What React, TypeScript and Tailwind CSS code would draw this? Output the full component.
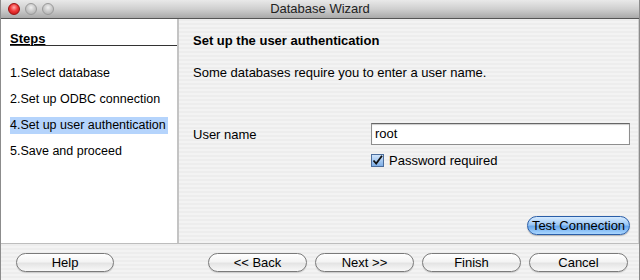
import React from "react";

const stripes =
  "bg-[repeating-linear-gradient(180deg,#ededed_0px,#ededed_2px,#f3f3f3_2px,#f3f3f3_4px)]";

function AquaButton({ label, width, blue }: { label: string; width: string; blue?: boolean }) {
  return (
    <div
      className={`${width} h-[19px] flex items-center justify-center rounded-full border text-[13px] leading-none whitespace-nowrap ${
        blue
          ? "border-[#2a5ea8] bg-[linear-gradient(180deg,#d6eaff_0%,#9cc8f5_45%,#6aa8ec_55%,#a9d6ff_100%)] text-black shadow-[0_1px_1px_rgba(0,0,0,0.25)]"
          : "border-[#7a7a7a] bg-[linear-gradient(180deg,#ffffff_0%,#f4f4f4_45%,#e4e4e4_55%,#f8f8f8_100%)] text-black shadow-[0_1px_1px_rgba(0,0,0,0.15)]"
      }`}
    >
      {label}
    </div>
  );
}

function Light({ red }: { red?: boolean }) {
  return (
    <div
      className={`w-[12px] h-[12px] rounded-full border ${
        red
          ? "border-[#9a1010] bg-[radial-gradient(circle_at_50%_35%,#ffb0b0_0%,#f03838_45%,#b80e0e_100%)]"
          : "border-[#9a9a9a] bg-[radial-gradient(circle_at_50%_35%,#f0f0f0_0%,#c8c8c8_50%,#a8a8a8_100%)]"
      }`}
    />
  );
}

export default function App() {
  const steps = [
    "1.Select database",
    "2.Set up ODBC connection",
    "4.Set up user authentication",
    "5.Save and proceed",
  ];

  return (
    <div
      className="w-[640px] h-[280px] flex flex-col overflow-hidden bg-[#ececec] border-x border-[#8c8c8c] text-[13px] text-black"
      style={{ fontFamily: '"Liberation Sans", Arial, sans-serif' }}
    >
      {/* Title bar */}
      <div className="relative h-[19px] shrink-0 flex items-center justify-center bg-[linear-gradient(180deg,#e9e9e9_0%,#cfcfcf_50%,#a9a9a9_100%)] border-b border-[#555]">
        <div className="absolute left-[7px] top-[3px] flex gap-[5px]">
          <Light red />
          <Light />
          <Light />
        </div>
        <span className="text-[13px] text-[#222]">Database Wizard</span>
      </div>

      {/* Body */}
      <div className="flex-1 flex min-h-0">
        {/* Steps panel */}
        <div className="w-[178px] shrink-0 bg-white border-r-2 border-[#c4c4c4] pl-[9px] pt-[13px] whitespace-nowrap">
          <div className="border-b border-[#333] font-bold underline h-[14px] leading-[13px] mb-[19px]">
            Steps
          </div>
          <div className="flex flex-col gap-[9px] pr-[9px] text-[12.5px]">
            {steps.map((s, i) => (
              <div
                key={s}
                className={`h-[17px] flex items-center ${i === 2 ? "bg-[#b5d4fc]" : ""}`}
              >
                {s}
              </div>
            ))}
          </div>
        </div>

        {/* Content panel */}
        <div className={`flex-1 flex flex-col ${stripes} pl-[14px] pr-[8px] pt-[14px] border-r border-[#d0d0d0] whitespace-nowrap`}>
          <div className="font-bold leading-[16px]">Set up the user authentication</div>
          <div className="mt-[16px] leading-[16px]">Some databases require you to enter a user name.</div>
          <div className="mt-[42px] flex items-center">
            <div className="w-[178px] pt-[2px]">User name</div>
            <div className="flex-1 h-[22px] bg-white border border-[#8e8e8e] border-t-[#666] flex items-center pl-[3px] shadow-[inset_0_1px_1px_rgba(0,0,0,0.2)]">
              root
            </div>
          </div>
          <div className="mt-[6px] flex items-center pl-[178px] gap-[5px]">
            <div className="w-[13px] h-[13px] border border-[#4b6d9c] bg-[linear-gradient(180deg,#cfe4fb,#7eaee6)] flex items-center justify-center">
              <svg width="11" height="11" viewBox="0 0 11 11">
                <path d="M1.5 5.5 L4.2 8.5 L10 0.8" fill="none" stroke="#111" strokeWidth="1.8" />
              </svg>
            </div>
            <span>Password required</span>
          </div>
          <div className="flex-1" />
          <div className="flex justify-end mb-[8px]">
            <AquaButton label="Test Connection" width="w-[103px]" blue />
          </div>
        </div>
      </div>

      {/* Footer */}
      <div className={`h-[37px] shrink-0 border-t border-[#bdbdbd] ${stripes} flex items-center pl-[15px] pr-[11px]`}>
        <AquaButton label="Help" width="w-[98px]" />
        <div className="flex-1" />
        <div className="flex gap-[8px]">
          <AquaButton label="<< Back" width="w-[99px]" />
          <AquaButton label="Next >>" width="w-[99px]" />
          <AquaButton label="Finish" width="w-[99px]" />
          <AquaButton label="Cancel" width="w-[99px]" />
        </div>
      </div>
    </div>
  );
}
